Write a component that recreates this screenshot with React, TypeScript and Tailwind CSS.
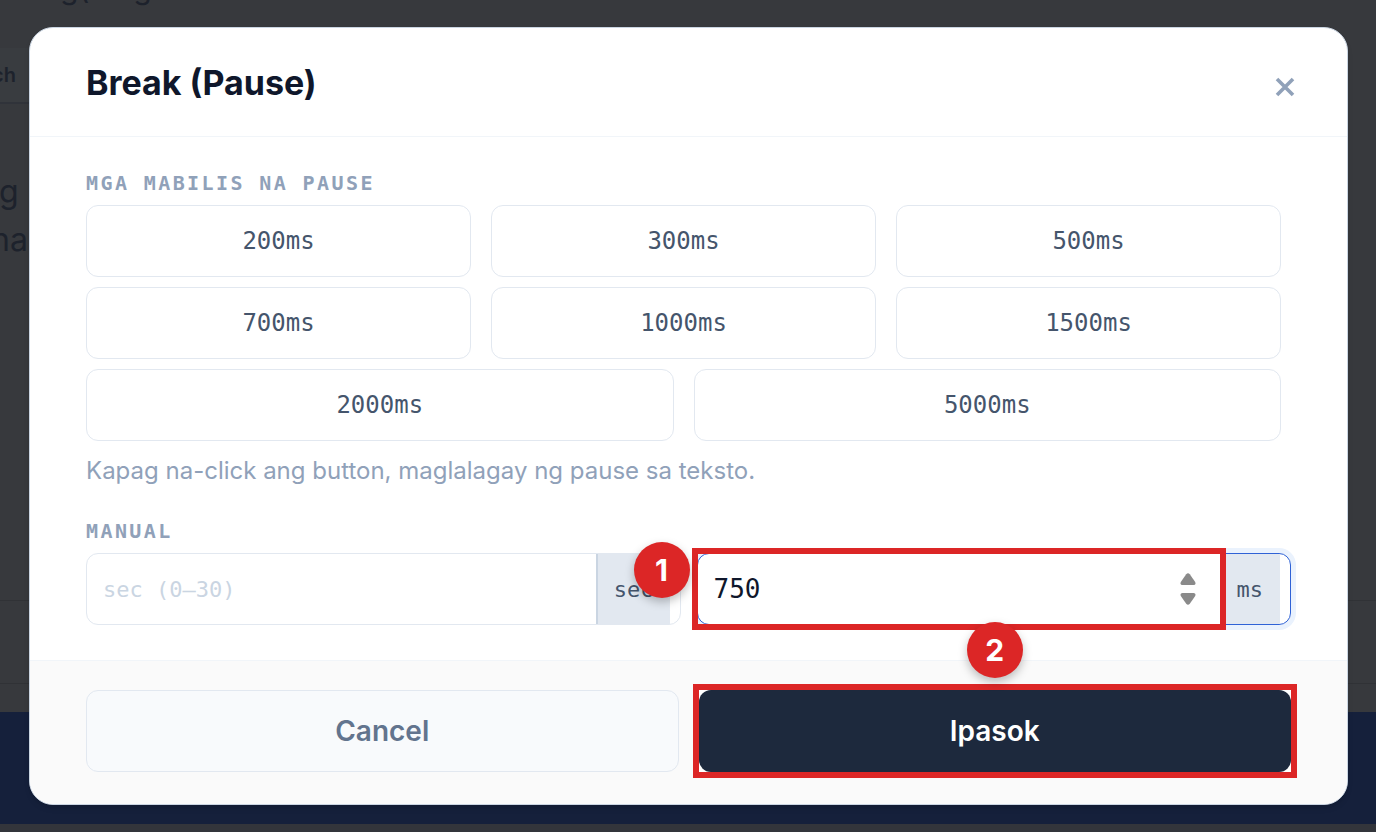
import { useState } from "react";

type PresetType = {
  label: string;
  wide: boolean;
};

const PRESET_LIST: PresetType[] = [
  { label: "200ms", wide: false },
  { label: "300ms", wide: false },
  { label: "500ms", wide: false },
  { label: "700ms", wide: false },
  { label: "1000ms", wide: false },
  { label: "1500ms", wide: false },
  { label: "2000ms", wide: true },
  { label: "5000ms", wide: true },
];

const MONO = "font-['DejaVu_Sans_Mono',monospace]";

function StepBadge({ step, className }: { step: number; className: string }) {
  return (
    <span
      className={`absolute z-20 flex size-14 items-center justify-center rounded-full bg-[#dc2626] text-3xl font-bold text-white shadow-[0_4px_10px_rgba(0,0,0,0.25)] ${className}`}
    >
      {step}
    </span>
  );
}

function Backdrop() {
  return (
    <div
      aria-hidden="true"
      className="absolute inset-0 flex flex-col overflow-hidden bg-[#37393d] text-[#1d222c]"
    >
      <div className="flex h-12 shrink-0 items-start gap-11 pl-15 text-3xl leading-6">
        <span className="-mt-6">g(</span>
        <span className="-mt-6">go</span>
      </div>
      <div className="flex h-14 w-20 shrink-0 items-center border-b-2 border-[#30333a] bg-[#393c40] text-xl font-semibold">
        <span className="-ml-2">ch</span>
      </div>
      <div className="mt-16 -ml-px w-8 flex-1 text-[32px] leading-12">
        <div>g</div>
        <div className="-ml-2">na</div>
      </div>
      <div className="h-[84px] shrink-0 border-y border-[#303236]" />
      <div className="h-7 shrink-0" />
      <div className="h-28 shrink-0 bg-[#15203b]" />
      <div className="h-2 shrink-0 bg-[#33353b]" />
    </div>
  );
}

export default function App() {
  const [sec, setSec] = useState<string>("");
  const [ms, setMs] = useState<string>("750");

  const handleStep = (diff: number) => {
    setMs(String(Math.max(0, Number(ms) + diff)));
  };

  return (
    <div className="relative min-h-screen py-[27px] pr-7 pl-[29px] font-['Inter',sans-serif]">
      <Backdrop />
      <div
        role="dialog"
        aria-labelledby="break-title"
        className="relative overflow-hidden rounded-3xl border border-slate-300 bg-white shadow-md"
      >
        <div className="flex h-[109px] items-end justify-between border-b border-slate-100 pr-12 pb-[35px] pl-14">
          <h2
            id="break-title"
            className="text-[34px] leading-9 font-bold text-slate-900"
          >
            Break (Pause)
          </h2>
          <button type="button" aria-label="Isara" className="cursor-pointer p-1 text-slate-400">
            <svg width="20" height="20" viewBox="0 0 20 20" fill="none">
              <path
                d="M2 2L18 18M18 2L2 18"
                stroke="currentColor"
                strokeWidth="3.6"
              />
            </svg>
          </button>
        </div>

        <div className="px-14 pt-8 pb-[35px]">
          <div className={`${MONO} text-xl leading-7 font-bold tracking-[0.12em] text-slate-400`}>
            MGA MABILIS NA PAUSE
          </div>
          <div className="mt-2 grid grid-cols-6 gap-x-5 gap-y-2.5 pr-2.5">
            {PRESET_LIST.map((preset: PresetType) => (
              <button
                key={preset.label}
                type="button"
                className={`${MONO} ${
                  preset.wide ? "col-span-3" : "col-span-2"
                } h-18 cursor-pointer rounded-xl border border-slate-200 bg-white text-2xl text-slate-600`}
              >
                {preset.label}
              </button>
            ))}
          </div>
          <p className="mt-3 text-2xl leading-9 text-slate-400">
            Kapag na-click ang button, maglalagay ng pause sa teksto.
          </p>

          <div
            className={`${MONO} mt-7 text-xl leading-7 font-bold tracking-[0.12em] text-slate-400`}
          >
            MANUAL
          </div>
          <div className="mt-2 grid grid-cols-2 gap-4">
            <div className="flex h-18 rounded-xl border border-slate-200 bg-white pr-2.5">
              <input
                id="sec"
                type="text"
                value={sec}
                onChange={(e) => setSec(e.target.value)}
                placeholder="sec (0–30)"
                className={`${MONO} min-w-0 flex-1 rounded-l-xl px-4 text-[22px] text-slate-900 outline-none placeholder:text-slate-300`}
              />
              <label
                htmlFor="sec"
                className={`${MONO} flex items-center border-l-2 border-slate-300 bg-slate-200 px-4 text-[22px] text-slate-600`}
              >
                sec
              </label>
            </div>

            <div className="flex h-18 rounded-xl border border-[#2f62d6] bg-white pr-2.5 ring-[5px] ring-[#eaf2fd]">
              <div className="relative flex min-w-0 flex-1 items-center">
                <input
                  id="ms"
                  type="text"
                  inputMode="numeric"
                  value={ms}
                  onChange={(e) => setMs(e.target.value)}
                  className={`${MONO} h-full min-w-0 flex-1 rounded-l-xl px-4 text-[26px] text-slate-900 outline-none`}
                />
                <div className="mr-6 flex flex-col gap-2 text-[#8a8a8a]">
                  <button type="button" aria-label="+50" onClick={() => handleStep(50)}>
                    <svg width="16" height="12" viewBox="0 0 16 12">
                      <path
                        d="M6.2 1.2Q8 -.8 9.8 1.2L15.2 9Q16.2 12 13.6 12H2.4Q-.2 12 .8 9Z"
                        fill="currentColor"
                      />
                    </svg>
                  </button>
                  <button type="button" aria-label="-50" onClick={() => handleStep(-50)}>
                    <svg width="16" height="12" viewBox="0 0 16 12">
                      <path
                        d="M6.2 10.8Q8 12.8 9.8 10.8L15.2 3Q16.2 0 13.6 0H2.4Q-.2 0 .8 3Z"
                        fill="currentColor"
                      />
                    </svg>
                  </button>
                </div>
                <span className="pointer-events-none absolute -inset-1.5 border-6 border-[#dc2626]" />
                <StepBadge step={1} className="-top-3 -left-16" />
              </div>
              <label
                htmlFor="ms"
                className={`${MONO} flex items-center bg-slate-200 px-[17px] text-[22px] text-slate-600`}
              >
                ms
              </label>
            </div>
          </div>
        </div>

        <div className="grid grid-cols-2 gap-5 border-t border-slate-100 bg-neutral-50 px-14 pt-[29px] pb-8">
          <button
            type="button"
            className="h-[82px] cursor-pointer rounded-xl border border-slate-200 bg-slate-50 text-[28px] font-semibold text-slate-500"
          >
            Cancel
          </button>
          <div className="relative bg-white">
            <button
              type="button"
              className="h-[82px] w-full cursor-pointer rounded-xl bg-slate-800 text-[28px] font-semibold text-white"
            >
              Ipasok
            </button>
            <span className="pointer-events-none absolute -inset-1.5 border-6 border-[#dc2626]" />
            <StepBadge step={2} className="-top-17 left-1/2 -translate-x-1/2" />
          </div>
        </div>
      </div>
    </div>
  );
}
